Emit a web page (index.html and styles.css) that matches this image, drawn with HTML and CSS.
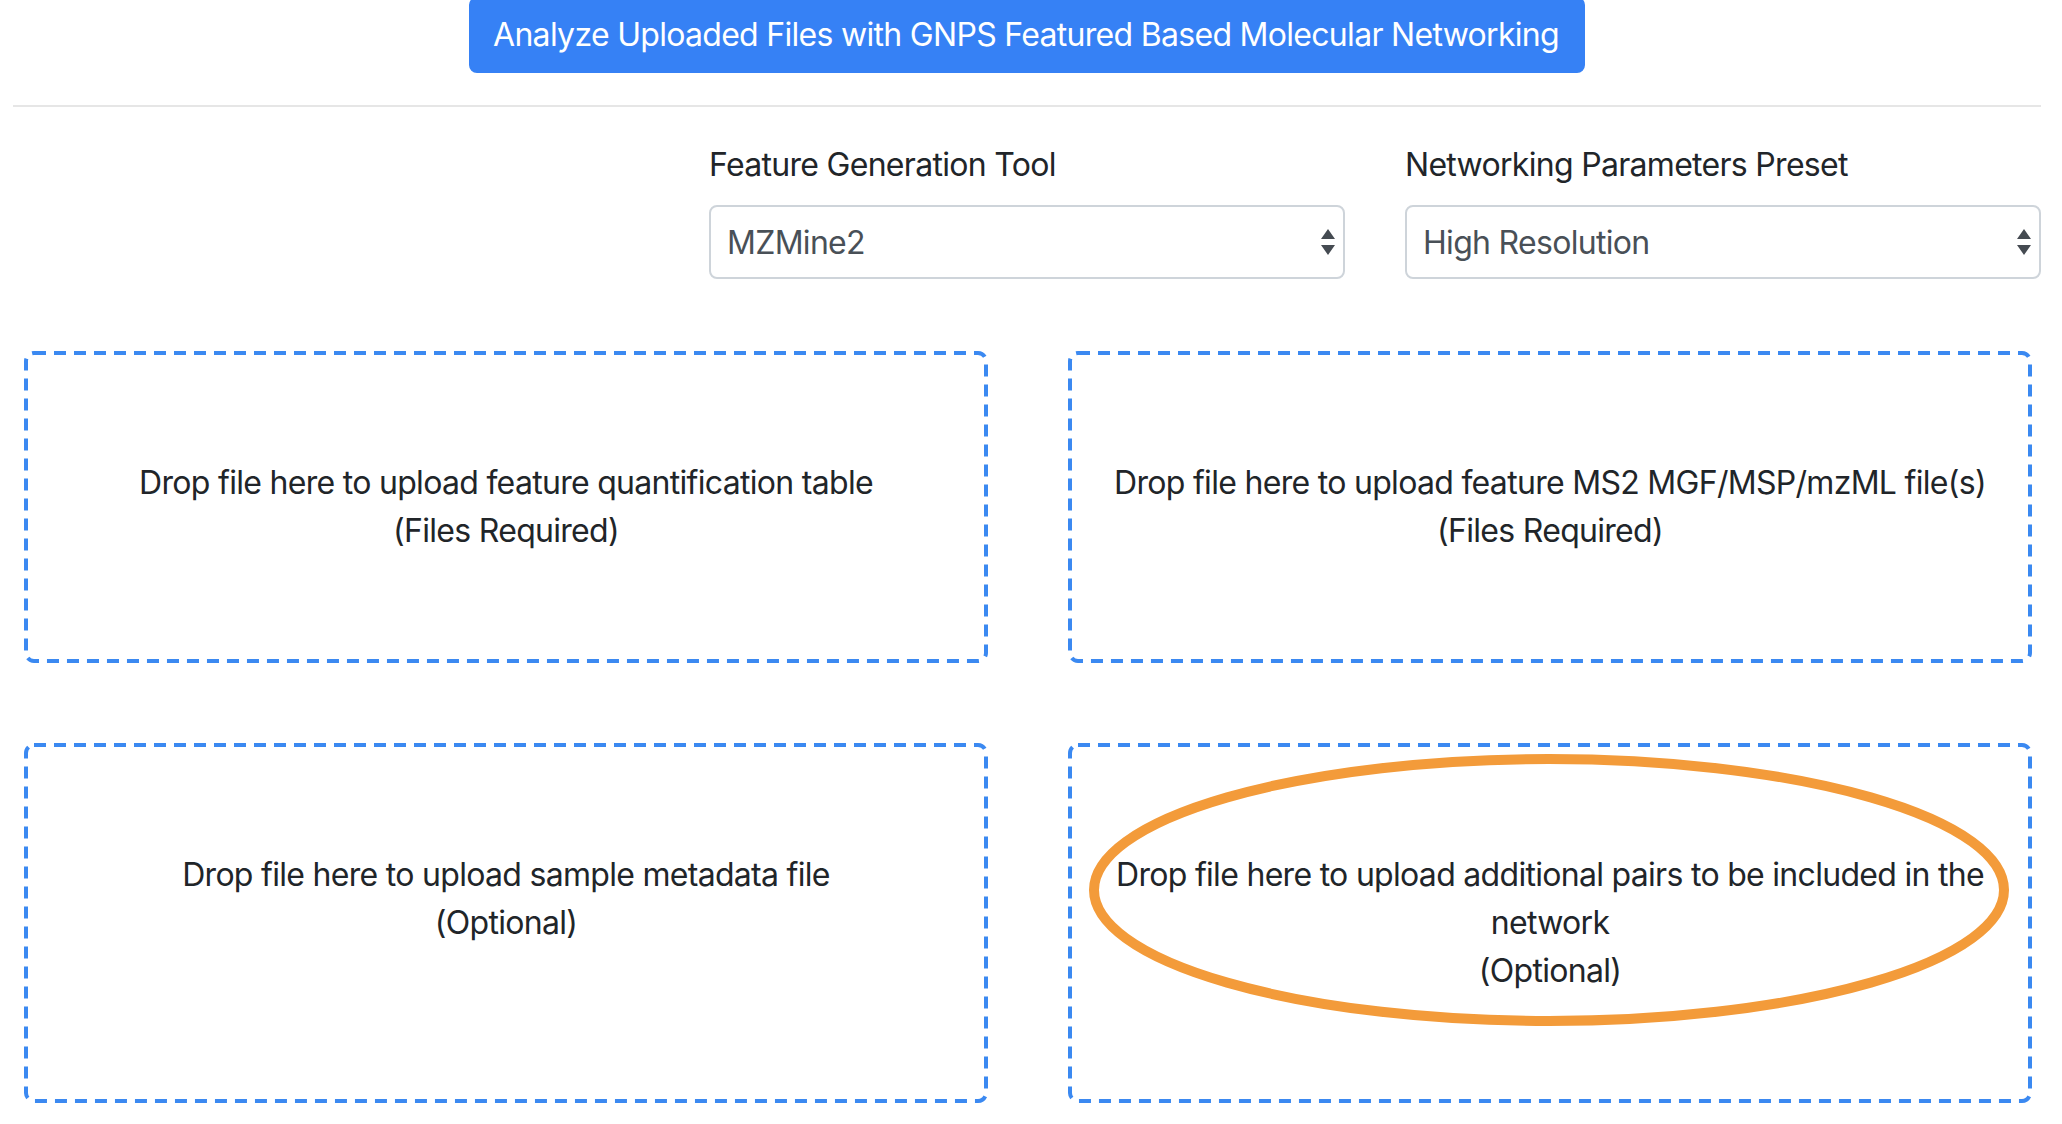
FILE: index.html
```html
<!DOCTYPE html>
<html lang="en">
<head>
<meta charset="utf-8">
<title>GNPS Feature Based Molecular Networking Upload</title>
<link rel="stylesheet" href="styles.css">
</head>
<body>
<div class="page">
  <div class="actions">
    <button class="btn-primary" type="button">Analyze Uploaded Files with GNPS Featured Based Molecular Networking</button>
  </div>
  <hr class="divider">
  <div class="params">
    <div class="param-spacer"></div>
    <div class="param">
      <label class="param-label">Feature Generation Tool</label>
      <div class="select-wrap">
        <select class="custom-select">
          <option>MZMine2</option>
        </select>
        <svg class="select-arrows" width="14" height="26" viewBox="0 0 14 26"><path d="M0 10L7 0L14 10Z M0 16L14 16L7 26Z" fill="#454b52"/></svg>
      </div>
    </div>
    <div class="param">
      <label class="param-label">Networking Parameters Preset</label>
      <div class="select-wrap">
        <select class="custom-select">
          <option>High Resolution</option>
        </select>
        <svg class="select-arrows" width="14" height="26" viewBox="0 0 14 26"><path d="M0 10L7 0L14 10Z M0 16L14 16L7 26Z" fill="#454b52"/></svg>
      </div>
    </div>
  </div>
  <div class="zones">
    <div class="dropzone">
      <svg class="dz-border"><rect class="dz-rect" x="2" y="2" rx="8" ry="8"/></svg>
      <div class="dz-line">Drop file here to upload feature quantification table</div>
      <div class="dz-line">(Files Required)</div>
    </div>
    <div class="dropzone">
      <svg class="dz-border"><rect class="dz-rect" x="2" y="2" rx="8" ry="8"/></svg>
      <div class="dz-line">Drop file here to upload feature MS2 MGF/MSP/mzML file(s)</div>
      <div class="dz-line">(Files Required)</div>
    </div>
    <div class="dropzone">
      <svg class="dz-border"><rect class="dz-rect" x="2" y="2" rx="8" ry="8"/></svg>
      <div class="dz-line">Drop file here to upload sample metadata file</div>
      <div class="dz-line">(Optional)</div>
    </div>
    <div class="dropzone">
      <svg class="dz-border"><rect class="dz-rect" x="2" y="2" rx="8" ry="8"/></svg>
      <div class="dz-line">Drop file here to upload additional pairs to be included in the network</div>
      <div class="dz-line">(Optional)</div>
      <svg class="highlight-ellipse" width="920" height="272" viewBox="0 0 920 272"><ellipse cx="460" cy="136" rx="455" ry="131" fill="none" stroke="#f39b3a" stroke-width="10"/></svg>
    </div>
  </div>
</div>
</body>
</html>
```

FILE: styles.css
```css
html, body {
  margin: 0;
  padding: 0;
  background: #ffffff;
}

body {
  font-family: Inter, "Noto Sans", "Liberation Sans", sans-serif;
  font-size: 32px;
  line-height: 48px;
  letter-spacing: -0.7px;
  color: #212529;
  overflow: hidden;
}

.page {
  padding: 0 21px 0 13px;
}

.actions {
  display: flex;
  justify-content: center;
  margin-top: -3px;
}

.btn-primary {
  font-family: inherit;
  font-size: 32px;
  line-height: 48px;
  letter-spacing: -0.7px;
  color: #ffffff;
  background: #3681f5;
  border: 2px solid #3681f5;
  border-radius: 8px;
  padding: 12px 24px 12px 22px;
  cursor: pointer;
}

.divider {
  border: 0;
  border-top: 2px solid #e6e6e6;
  margin: 32px 0 34px;
}

.params {
  display: grid;
  grid-template-columns: repeat(3, 1fr);
  column-gap: 60px;
}

.param-label {
  display: block;
  margin-bottom: 16px;
  color: #212529;
}

.select-wrap {
  position: relative;
}

.custom-select {
  display: block;
  width: 100%;
  height: 74px;
  box-sizing: border-box;
  padding: 12px 48px 12px 16px;
  font-family: inherit;
  font-size: 32px;
  line-height: 48px;
  letter-spacing: -0.7px;
  color: #495057;
  background: #ffffff;
  border: 2px solid #ced4da;
  border-radius: 8px;
  appearance: none;
  -webkit-appearance: none;
}

.select-arrows {
  position: absolute;
  right: 10px;
  top: 24px;
  pointer-events: none;
}

.zones {
  display: grid;
  grid-template-columns: 1fr 1fr;
  gap: 80px;
  margin: 72px 9px 0 11px;
}

.dropzone {
  position: relative;
  text-align: center;
  box-sizing: border-box;
  padding: 108px 20px;
  color: #212529;
}

.dz-border {
  position: absolute;
  left: 0;
  top: 0;
  width: 100%;
  height: 100%;
  pointer-events: none;
}

.dz-rect {
  width: calc(100% - 4px);
  height: calc(100% - 4px);
  fill: none;
  stroke: #3b89f1;
  stroke-width: 4;
  stroke-dasharray: 12 8;
}

.highlight-ellipse {
  position: absolute;
  left: 21px;
  top: 11px;
  pointer-events: none;
}
```
